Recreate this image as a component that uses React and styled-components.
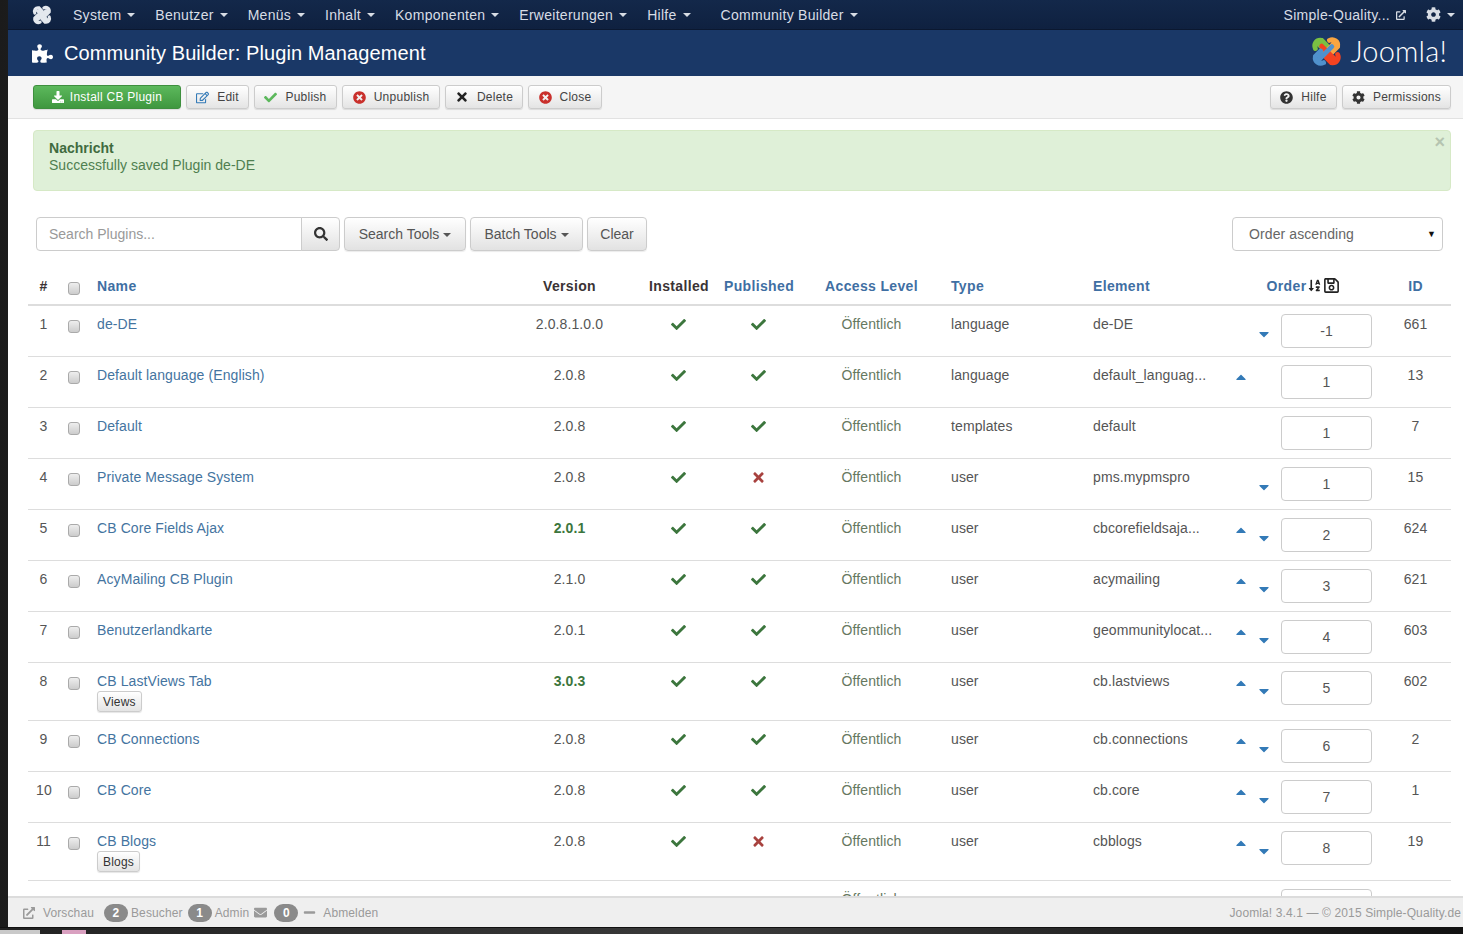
import React from 'react';
import styled, { createGlobalStyle } from 'styled-components';
import { FaCheck, FaTimes, FaTimesCircle, FaRegEdit, FaCog, FaQuestionCircle, FaPuzzlePiece, FaSearch, FaSortAlphaDown, FaRegSave, FaEnvelope, FaMinus, FaExternalLinkAlt, FaDownload, FaCaretUp, FaCaretDown } from 'react-icons/fa';

const Global = createGlobalStyle`
  html, body { margin: 0; padding: 0; height: 100%; background: #2b2b2b; }
  * { box-sizing: border-box; }
  body { font-family: "Liberation Sans", Arial, sans-serif; font-size: 14px; color: #555; overflow: hidden; }
`;

const Desktop = styled.div`
  height: 934px; width: 1463px; display: flex; flex-direction: column;
  background: linear-gradient(90deg, #1b1b1b 0, #555 40%, #222 100%);
`;
const Frame = styled.div`
  margin-left: 8px; height: 927px; flex: none; display: flex; flex-direction: column; background: #fff; overflow: hidden;
`;
const Taskbar = styled.div`
  flex: 1; background: linear-gradient(90deg, #222, #3a3a3a 50%, #111); border-top: 1px solid #111; display: flex;
`;
const TaskTab = styled.span`
  width: 40px; height: 4px; margin-top: 2px; background: #c9c9c9;
`;
const TaskPin = styled.span`
  width: 24px; height: 4px; margin: 2px 0 0 22px; background: #d9a0c0;
`;

const Nav = styled.nav`
  height: 30px; flex: none; display: flex; align-items: center; padding-left: 24px; padding-right: 8px;
  background: linear-gradient(#13284a, #0f2140); border-bottom: 1px solid #0b1830; color: #d8dde5;
  font-size: 14px; letter-spacing: .28px;
`;
const NavLogo = styled.span`
  width: 20px; height: 20px; margin-right: 21px; display: flex;
`;
const NavItem = styled.span`
  display: flex; align-items: center; gap: 6px; margin-right: ${p => p.$gap ?? 20}px; white-space: nowrap;
`;
const Caret = styled.span`
  display: inline-block; width: 0; height: 0; border-left: 4px solid transparent; border-right: 4px solid transparent;
  border-top: 4px solid currentColor; margin-top: 1px;
`;
const NavSpacer = styled.span` flex: 1; `;

const Header = styled.header`
  height: 46px; flex: none; display: flex; align-items: center; padding: 0 16px 0 24px; background: #1a3867; color: #fff;
`;
const Title = styled.h1`
  margin: 0 0 0 11px; font-size: 20px; font-weight: 400; letter-spacing: .1px; white-space: nowrap;
`;
const Brand = styled.div`
  margin-left: auto; display: flex; align-items: center; gap: 9px; margin-top: -4px;
`;
const BrandName = styled.span`
  font-family: "Lato", "Open Sans", sans-serif; font-weight: 300; font-size: 29px; line-height: 30px; color: #fff; letter-spacing: .2px;
`;

const Toolbar = styled.div`
  height: 43px; flex: none; display: flex; align-items: flex-start; gap: 5px; padding: 9px 12px 0 25px; background: #f5f5f5; border-bottom: 1px solid #e2e2e2;
`;
const Btn = styled.button`
  height: 24px; width: ${p => p.$w}px; padding: 0; flex: none; display: inline-flex; align-items: center; justify-content: center; gap: 8px;
  font-family: inherit; font-size: 12px; letter-spacing: .25px; color: #444;
  background: linear-gradient(#ffffff, #e4e4e4); border: 1px solid #ccc; border-radius: 3px; box-shadow: 0 1px 1px rgba(0,0,0,.1);
`;
const GreenBtn = styled(Btn)`
  background: linear-gradient(#5cb85c, #3f973f); border-color: #3e8f3e; color: #fff; gap: 6px;
`;
const ToolGap = styled.span` margin-left: auto; `;
const Ic = styled.span`
  display: inline-flex; color: ${p => p.$c || 'inherit'}; font-size: ${p => p.$s || 13}px;
`;

const Main = styled.main`
  flex: 1; min-height: 0; overflow: hidden; padding: 11px 12px 0 20px;
`;
const Alert = styled.div`
  position: relative; height: 61px; margin-left: 5px; padding: 9px 15px; background: #dff0d8; border: 1px solid #d6e9c6; border-radius: 4px;
  color: #4f7f50; font-size: 14px; line-height: 16.5px; letter-spacing: .02px;
`;
const AlertHead = styled.div` font-weight: 700; color: #3f6b3f; `;
const AlertClose = styled.span`
  position: absolute; right: 5px; top: 2px; font-size: 18px; line-height: 18px; font-weight: 700; color: #b5c4b0;
`;

const Filters = styled.div`
  display: flex; height: 34px; margin: 26px 8px 0 8px; gap: 4px; align-items: stretch;
`;
const SearchGroup = styled.div` display: flex; width: 304px; `;
const SearchInput = styled.div`
  flex: 1; border: 1px solid #ccc; border-radius: 4px 0 0 4px; padding: 0 12px; display: flex; align-items: center; color: #999; background: #fff;
`;
const SearchBtn = styled.div`
  width: 39px; display: flex; align-items: center; justify-content: center; margin-left: -1px; color: #333;
  background: linear-gradient(#fff, #e2e2e2); border: 1px solid #ccc; border-radius: 0 4px 4px 0; font-size: 14px;
`;
const FilterBtn = styled.div`
  width: ${p => p.$w}px; display: flex; align-items: center; justify-content: center; gap: 4px; color: #555;
  background: linear-gradient(#fff, #e2e2e2); border: 1px solid #ccc; border-radius: 4px; box-shadow: 0 1px 1px rgba(0,0,0,.08);
`;
const Select = styled.div`
  margin-left: auto; width: 211px; border: 1px solid #ccc; border-radius: 4px; display: flex; align-items: center; justify-content: space-between;
  padding: 0 6px 0 16px; background: #fff; color: #666; letter-spacing: .1px;
`;
const SelectArrow = styled.span` font-size: 9px; color: #111; `;

const Table = styled.table`
  width: 1423px; table-layout: fixed; border-collapse: separate; border-spacing: 0; margin-top: 19px; font-size: 14px;
`;
const Th = styled.th`
  height: 36px; padding: 0 8px 3px; font-size: 14px; font-weight: 700; letter-spacing: .35px; white-space: nowrap;
  text-align: ${p => p.$left ? 'left' : 'center'}; color: ${p => p.$link ? '#3f6fa3' : '#3a3335'}; border-bottom: 2px solid #ddd;
`;
const Td = styled.td`
  padding: 8px; vertical-align: top; line-height: 20px; border-bottom: 1px solid #ddd; letter-spacing: .1px;
  text-align: ${p => p.$left ? 'left' : 'center'}; color: ${p => p.$c || '#555'}; font-weight: ${p => p.$b ? 700 : 400};
`;
const ElementTd = styled(Td)` white-space: nowrap; overflow: hidden; padding-right: 0; `;
const OrderTd = styled(Td)` padding: 8px 0 8px 15px; `;
const NameLink = styled.a` display: block; color: #44749f; `;
const TabBtn = styled.span`
  display: block; width: max-content; height: 21px; padding: 0 5px; font-size: 12px; line-height: 20px; color: #333; letter-spacing: .2px;
  background: linear-gradient(#fff, #e4e4e4); border: 1px solid #ccc; border-radius: 3px; box-shadow: 0 1px 1px rgba(0,0,0,.1);
`;
const Check = styled.span`
  display: inline-block; width: 12px; height: 13px; margin-top: ${p => p.$top ?? 6}px; border: 1px solid #aaa; border-radius: 3px;
  background: linear-gradient(#eee, #ccc); vertical-align: top;
`;
const HeadCheck = styled(Check)` margin-top: 5px; vertical-align: middle; `;
const StatusIcon = styled.span`
  display: inline-flex; height: 20px; align-items: center; font-size: 15px; color: ${p => p.$bad ? '#a8423f' : '#3c763d'};
`;
const OrderBox = styled.div` display: flex; align-items: flex-start; `;
const ArrowSlot = styled.span`
  width: 12px; margin-right: 11px; height: 12px; margin-top: ${p => p.$top}px; display: flex; justify-content: center; color: #337ab7; font-size: 16px; line-height: 12px; flex: none;
  & svg { display: block; margin-top: -2px; }
`;
const OrderInput = styled.div`
  width: 91px; height: 34px; border: 1px solid #ccc; border-radius: 4px; display: flex; align-items: center; justify-content: center; color: #555; background: #fff;
`;
const OrderHead = styled.span`
  display: inline-flex; align-items: center; gap: 2px; margin-left: 7px; font-size: 14px; color: #3f6fa3;
`;
const HeadIcon = styled.span` display: inline-flex; color: #222; font-size: ${p => p.$s}px; `;

const Footer = styled.footer`
  height: 31px; flex: none; display: flex; align-items: center; padding: 0 2px 0 15px; background: #efefef; border-top: 2px solid #dcdcdc; color: #9a9a9a; font-size: 12px; letter-spacing: .12px;
  position: relative;
`;
const FootItem = styled.span` display: inline-flex; align-items: center; margin-left: ${p => p.$ml ?? 0}px; gap: ${p => p.$gap ?? 0}px; white-space: nowrap; `;
const Badge = styled.span`
  width: 24px; height: 18px; border-radius: 9px; background: #8a8a8a; color: #fff; font-weight: 700; font-size: 12px; display: inline-flex; align-items: center; justify-content: center;
`;
const FootRight = styled.span` margin-left: auto; white-space: nowrap; `;

const ExtIcon = styled(FaExternalLinkAlt)` font-size: 10px; `;

function JoomlaMark({ colors, size }) {
  const d = 'M4.5 13 C2.5 8.5 5.5 3.5 11 4.5 L16.5 10 M8.5 9 L21 21.5';
  return (
    <svg width={size} height={size} viewBox="0 0 32 32" fill="none" strokeWidth="5" strokeLinecap="round">
      {colors.map((c, i) => (
        <path key={i} d={d} stroke={c} transform={`rotate(${i * 90} 16 16)`} />
      ))}
    </svg>
  );
}

const navItems = [['System'], ['Benutzer'], ['Menüs'], ['Inhalt'], ['Komponenten'], ['Erweiterungen'], ['Hilfe', 30], ['Community Builder']];
const rows = [
  [1, 'de-DE', '2.0.8.1.0.0', 1, 1, 'language', 'de-DE', '-1', 661, 0, 1],
  [2, 'Default language (English)', '2.0.8', 1, 1, 'language', 'default_languag...', '1', 13, 1, 0],
  [3, 'Default', '2.0.8', 1, 1, 'templates', 'default', '1', 7, 0, 0],
  [4, 'Private Message System', '2.0.8', 1, 0, 'user', 'pms.mypmspro', '1', 15, 0, 1],
  [5, 'CB Core Fields Ajax', '2.0.1', 1, 1, 'user', 'cbcorefieldsaja...', '2', 624, 1, 1, null, 1],
  [6, 'AcyMailing CB Plugin', '2.1.0', 1, 1, 'user', 'acymailing', '3', 621, 1, 1],
  [7, 'Benutzerlandkarte', '2.0.1', 1, 1, 'user', 'geommunitylocat...', '4', 603, 1, 1],
  [8, 'CB LastViews Tab', '3.0.3', 1, 1, 'user', 'cb.lastviews', '5', 602, 1, 1, 'Views', 1],
  [9, 'CB Connections', '2.0.8', 1, 1, 'user', 'cb.connections', '6', 2, 1, 1],
  [10, 'CB Core', '2.0.8', 1, 1, 'user', 'cb.core', '7', 1, 1, 1],
  [11, 'CB Blogs', '2.0.8', 1, 0, 'user', 'cbblogs', '8', 19, 1, 1, 'Blogs'],
];
const widths = [31, 30, 409, 143, 75, 84, 143, 142, 135, 160, 71];

export default function App() {
  return (
    <Desktop>
      <Global />
      <Frame>
        <Nav>
          <NavLogo><JoomlaMark size={20} colors={['#e4e8ee', '#e4e8ee', '#e4e8ee', '#e4e8ee']} /></NavLogo>
          {navItems.map(([t, g]) => <NavItem key={t} $gap={g}>{t} <Caret /></NavItem>)}
          <NavSpacer />
          <NavItem $gap={20}>Simple-Quality... <ExtIcon /></NavItem>
          <NavItem $gap={0}><Ic $s={15}><FaCog /></Ic><Caret /></NavItem>
        </Nav>
        <Header>
          <Ic $s={21}><FaPuzzlePiece /></Ic>
          <Title>Community Builder: Plugin Management</Title>
          <Brand><JoomlaMark size={31} colors={['#7ac143', '#f9a541', '#f44321', '#5091cd']} /><BrandName>Joomla!</BrandName></Brand>
        </Header>
        <Toolbar>
          <GreenBtn $w={148}><Ic $s={12}><FaDownload /></Ic>Install CB Plugin</GreenBtn>
          <Btn $w={63}><Ic $c="#337ab7"><FaRegEdit /></Ic>Edit</Btn>
          <Btn $w={83}><Ic $c="#5cb85c"><FaCheck /></Ic>Publish</Btn>
          <Btn $w={98}><Ic $c="#c9302c"><FaTimesCircle /></Ic>Unpublish</Btn>
          <Btn $w={78}><Ic $c="#222" $s={14}><FaTimes /></Ic>Delete</Btn>
          <Btn $w={74}><Ic $c="#c9302c"><FaTimesCircle /></Ic>Close</Btn>
          <ToolGap />
          <Btn $w={67}><Ic $c="#333"><FaQuestionCircle /></Ic>Hilfe</Btn>
          <Btn $w={109}><Ic $c="#333"><FaCog /></Ic>Permissions</Btn>
        </Toolbar>
        <Main>
          <Alert>
            <AlertClose>×</AlertClose>
            <AlertHead>Nachricht</AlertHead>
            Successfully saved Plugin de-DE
          </Alert>
          <Filters>
            <SearchGroup>
              <SearchInput>Search Plugins...</SearchInput>
              <SearchBtn><FaSearch /></SearchBtn>
            </SearchGroup>
            <FilterBtn $w={122}>Search Tools <Caret /></FilterBtn>
            <FilterBtn $w={113}>Batch Tools <Caret /></FilterBtn>
            <FilterBtn $w={60}>Clear</FilterBtn>
            <Select>Order ascending <SelectArrow>▼</SelectArrow></Select>
          </Filters>
          <Table>
            <colgroup>{widths.map((w, i) => <col key={i} style={{ width: w }} />)}</colgroup>
            <thead>
              <tr>
                <Th>#</Th>
                <Th><HeadCheck /></Th>
                <Th $left $link>Name</Th>
                <Th>Version</Th>
                <Th>Installed</Th>
                <Th $link>Published</Th>
                <Th $link>Access Level</Th>
                <Th $left $link>Type</Th>
                <Th $left $link>Element</Th>
                <Th $link>
                  <OrderHead>Order <HeadIcon $s={13}><FaSortAlphaDown /></HeadIcon><HeadIcon $s={17}><FaRegSave /></HeadIcon></OrderHead>
                </Th>
                <Th $link>ID</Th>
              </tr>
            </thead>
            <tbody>
              {rows.map(([n, name, ver, inst, pub, type, el, ord, id, up, down, tab, hot]) => (
                <tr key={n}>
                  <Td>{n}</Td>
                  <Td><Check /></Td>
                  <Td $left><NameLink>{name}</NameLink>{tab && <TabBtn>{tab}</TabBtn>}</Td>
                  <Td $c={hot ? '#3c763d' : undefined} $b={hot}>{ver}</Td>
                  <Td><StatusIcon><FaCheck /></StatusIcon></Td>
                  <Td><StatusIcon $bad={!pub}>{pub ? <FaCheck /> : <FaTimes />}</StatusIcon></Td>
                  <Td $c="#66785f">Öffentlich</Td>
                  <Td $left>{type}</Td>
                  <ElementTd $left>{el}</ElementTd>
                  <OrderTd>
                    <OrderBox>
                      <ArrowSlot $top={6}>{up ? <FaCaretUp /> : null}</ArrowSlot>
                      <ArrowSlot $top={14}>{down ? <FaCaretDown /> : null}</ArrowSlot>
                      <OrderInput>{ord}</OrderInput>
                    </OrderBox>
                  </OrderTd>
                  <Td>{id}</Td>
                </tr>
              ))}
              <tr>
                <Td /><Td /><Td /><Td /><Td /><Td />
                <Td $c="#66785f">Öffentlich</Td>
                <Td /><Td />
                <OrderTd>
                  <OrderBox>
                    <ArrowSlot $top={6} /><ArrowSlot $top={14} />
                    <OrderInput>9</OrderInput>
                  </OrderBox>
                </OrderTd>
                <Td />
              </tr>
            </tbody>
          </Table>
        </Main>
        <Footer>
          <FootItem $gap={8}><Ic $s={12}><FaExternalLinkAlt /></Ic>Vorschau</FootItem>
          <FootItem $ml={10} $gap={3}><Badge>2</Badge>Besucher</FootItem>
          <FootItem $ml={5} $gap={3}><Badge>1</Badge>Admin</FootItem>
          <FootItem $ml={5}><Ic $s={13}><FaEnvelope /></Ic></FootItem>
          <FootItem $ml={7}><Badge>0</Badge></FootItem>
          <FootItem $ml={5}><Ic $s={13}><FaMinus /></Ic></FootItem>
          <FootItem $ml={7}>Abmelden</FootItem>
          <FootRight>Joomla! 3.4.1 — © 2015 Simple-Quality.de</FootRight>
        </Footer>
      </Frame>
      <Taskbar><TaskTab /><TaskPin /></Taskbar>
    </Desktop>
  );
}
